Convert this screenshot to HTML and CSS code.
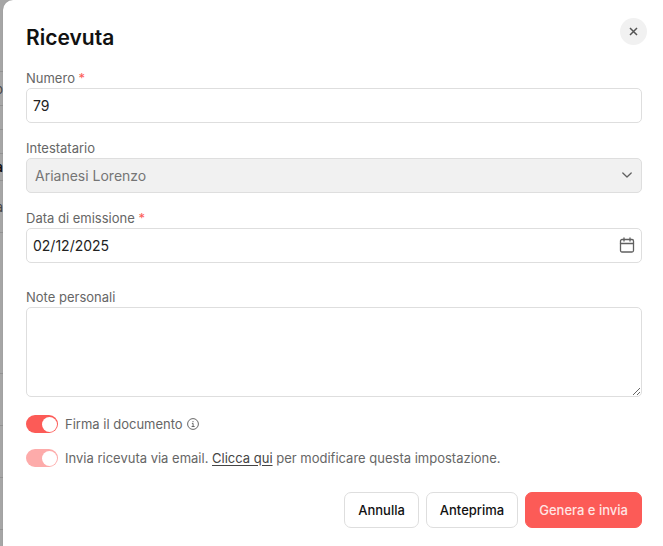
FILE: index.html
```
<!DOCTYPE html>
<html lang="it">
<head>
<meta charset="UTF-8">
<meta name="viewport" content="width=device-width, initial-scale=1.0">
<title>Ricevuta</title>
<link rel="stylesheet" href="styles.css">
</head>
<body>
<div class="backdrop" aria-hidden="true">
  <div class="line head"></div>
  <div class="line">o</div>
  <div class="line short"></div>
  <div class="line short"></div>
  <div class="line medium dark">a</div>
  <div class="line tall">a</div>
  <div class="line huge"></div>
  <div class="line tall"></div>
  <div class="line tall"></div>
  <div class="line tall"></div>
</div>

<form class="modal" role="dialog" aria-labelledby="modalTitle">
  <header class="modal-header">
    <h2 id="modalTitle">Ricevuta</h2>
    <button type="button" class="close" aria-label="Chiudi">
      <svg width="9" height="9" viewBox="0 0 9 9" fill="none" stroke="currentColor" stroke-width="1.5"><path d="M1 1l7 7M8 1L1 8"/></svg>
    </button>
  </header>

  <div class="field">
    <label for="numero">Numero <span class="required">*</span></label>
    <input type="text" id="numero" class="control" value="79">
  </div>

  <div class="field">
    <label for="intestatario">Intestatario</label>
    <div class="control-wrap">
      <select id="intestatario" class="control" disabled>
        <option>Arianesi Lorenzo</option>
      </select>
      <svg class="control-icon" width="16" height="16" viewBox="0 0 16 16" fill="none" stroke="currentColor" stroke-width="1.3" stroke-linecap="round" stroke-linejoin="round"><path d="M3.800 6L8 10l4.200-4"/></svg>
    </div>
  </div>

  <div class="field date">
    <label for="data">Data di emissione <span class="required">*</span></label>
    <div class="control-wrap">
      <input type="text" id="data" class="control" value="02/12/2025">
      <svg class="control-icon" width="16" height="16" viewBox="0 0 16 16" fill="none" stroke="currentColor" stroke-width="1.3" stroke-linecap="round" stroke-linejoin="round"><rect x="1.500" y="2.500" width="13" height="12.500" rx="1.500"/><path d="M1.500 6.500h13M5 1v3M11 1v3"/></svg>
    </div>
  </div>

  <div class="field">
    <label for="note">Note personali</label>
    <textarea id="note" class="control"></textarea>
  </div>

  <div class="switches">
    <div class="switch-row">
      <input type="checkbox" id="firma" class="switch" checked>
      <label for="firma">Firma il documento</label>
      <svg class="info" width="12" height="12" viewBox="0 0 12 12" fill="none" stroke="currentColor"><circle cx="6" cy="6" r="5.400"/><path d="M4.900 5.400h1.200v3M4.600 8.500h3M6 3v1.200"/></svg>
    </div>
    <div class="switch-row">
      <input type="checkbox" id="email" class="switch" checked disabled>
      <label for="email">Invia ricevuta via email. <a href="#">Clicca qui</a> per modificare questa impostazione.</label>
    </div>
  </div>

  <footer class="actions">
    <button type="button" class="btn">Annulla</button>
    <button type="button" class="btn">Anteprima</button>
    <button type="submit" class="btn primary">Genera e invia</button>
  </footer>
</form>
</body>
</html>
```
FILE: styles.css
```
* {
  box-sizing: border-box;
}
body {
  margin: 0;
  min-height: 100vh;
  background-color: #a6a6a6;
  font-family: Inter, "Liberation Sans", sans-serif;
  font-size: 13px;
  color: #666;
}

/* dimmed page behind the modal */
.backdrop {
  position: absolute;
  top: 0;
  left: 0;
  width: 3px;
  height: 100%;
  overflow: hidden;
}
.line {
  display: flex;
  align-items: center;
  justify-content: flex-end;
  height: 34px;
  border-bottom: 1px solid #929292;
  color: #444;
}
.line.head {
  height: 72px;
}
.line.short {
  height: 24px;
}
.line.medium {
  height: 27px;
}
.line.dark {
  color: #111;
  font-weight: 600;
}
.line.tall {
  height: 52px;
}
.line.huge {
  height: 141px;
}

.modal {
  position: relative;
  min-height: 100vh;
  margin-left: 3px;
  padding: 18px 21px 18px 23px;
  border-radius: 10px 0 0 0;
  background-color: #fff;
  box-shadow: 0 0 1px #888;
}
.modal-header {
  display: flex;
  justify-content: space-between;
  height: 50px;
}
h2 {
  margin: 0;
  padding-top: 5px;
  font-size: 21px;
  line-height: 30px;
  font-weight: 600;
  color: #111;
}
.close {
  display: flex;
  align-items: center;
  justify-content: center;
  width: 27px;
  height: 27px;
  margin-right: -5px;
  padding: 0;
  border: none;
  border-radius: 50%;
  background-color: #f1f1f1;
  color: #555;
  cursor: pointer;
}

.field {
  margin-bottom: 15px;
}
.field.date {
  margin-bottom: 24px;
}
.field label {
  display: block;
  line-height: 20px;
}
.required {
  color: #fc5b57;
}
.control {
  display: block;
  width: 100%;
  height: 35px;
  padding: 0 6px;
  border: 1px solid #dedede;
  border-radius: 5px;
  background-color: #fff;
  font-family: inherit;
  font-size: 14px;
  color: #222;
}
select.control {
  appearance: none;
  padding: 0 8px;
  background-color: #f1f1f1;
  color: #757575;
  opacity: 1;
}
textarea.control {
  height: 90px;
  padding: 7px;
  resize: vertical;
}
.control-wrap {
  position: relative;
}
.control-icon {
  position: absolute;
  top: 9px;
  right: 7px;
  color: #606060;
  pointer-events: none;
}

.switches {
  display: flex;
  flex-direction: column;
  gap: 14px;
  margin: 17px 0 24px;
}
.switch-row {
  display: flex;
  align-items: center;
  line-height: 20px;
}
.switch {
  display: flex;
  align-items: center;
  justify-content: flex-end;
  appearance: none;
  width: 32px;
  height: 18px;
  margin: 0 7px 0 0;
  padding: 1px;
  border-radius: 9px;
  background-color: #fc5b57;
}
.switch::before {
  content: "";
  width: 15px;
  height: 15px;
  border-radius: 50%;
  background-color: #fff;
}
.switch:disabled {
  background-color: #fdabaa;
}
.info {
  margin-left: 4px;
}
a {
  color: #444;
  text-underline-offset: 2px;
}

.actions {
  display: flex;
  justify-content: flex-end;
  gap: 7px;
}
.btn {
  height: 36px;
  padding: 0 13px;
  border: 1px solid #dedede;
  border-radius: 7px;
  background-color: #fff;
  font-family: inherit;
  font-size: 13px;
  font-weight: 500;
  color: #111;
  cursor: pointer;
}
.btn.primary {
  border-color: #fc5b57;
  background-color: #fc5b57;
  color: #ffe5e4;
}
```
